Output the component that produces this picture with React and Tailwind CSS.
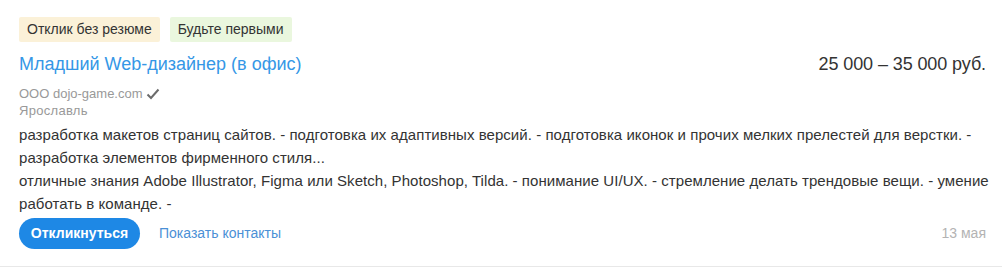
export default function App() {
  return (
    <div className="w-[1002px] h-[270px] bg-white" style={{ fontFamily: '"Liberation Sans", Arial, sans-serif' }}>
      <div className="pl-[19px] pr-[16px] pt-[17px] pb-[17px] border-b border-[#e8e8e8]">
        <div className="flex gap-[10px]">
          <span className="h-[25px] px-[8px] flex items-center bg-[#fbf1d8] text-[14px] text-[#333] rounded-[2px]">Отклик без резюме</span>
          <span className="h-[25px] px-[8px] flex items-center bg-[#eaf7de] text-[14px] text-[#333] rounded-[2px]">Будьте первыми</span>
        </div>
        <div className="flex justify-between items-center mt-[10px] h-[24px]">
          <a className="text-[18px] leading-[24px] text-[#3597e6]">Младший Web-дизайнер (в офис)</a>
          <span className="text-[18px] leading-[24px] text-[#333] tracking-[-0.1px]">25 000 – 35 000 руб.</span>
        </div>
        <div className="mt-[10px] flex items-center gap-[3px] text-[13px] leading-[16px] text-[#999]">
          <span>ООО dojo-game.com</span>
          <svg width="14" height="12" viewBox="0 0 14 12">
            <path d="M1.5 6.5 L5 10 L12.5 1.5" fill="none" stroke="#6b6b6b" strokeWidth="2" />
          </svg>
        </div>
        <div className="mt-[1px] text-[13px] leading-[16px] tracking-[0.3px] text-[#999]">Ярославль</div>
        <div className="mt-[4px] text-[15px] leading-[23px] tracking-[0.05px] text-[#333] whitespace-nowrap">
          разработка макетов страниц сайтов. - подготовка их адаптивных версий. - подготовка иконок и прочих мелких прелестей для верстки. -<br />
          разработка элементов фирменного стиля...<br />
          отличные знания Adobe Illustrator, Figma или Sketch, Photoshop, Tilda. - понимание UI/UX. - стремление делать трендовые вещи. - умение<br />
          работать в команде. -
        </div>
        <div className="mt-[3px] flex items-center">
          <button className="h-[31px] w-[121px] rounded-full bg-[#1e88e5] text-white text-[14px] font-bold">Откликнуться</button>
          <a className="ml-[19px] text-[14px] text-[#4a90d6]">Показать контакты</a>
          <span className="ml-auto text-[14px] text-[#b3b3b3]">13 мая</span>
        </div>
      </div>
    </div>
  );
}
